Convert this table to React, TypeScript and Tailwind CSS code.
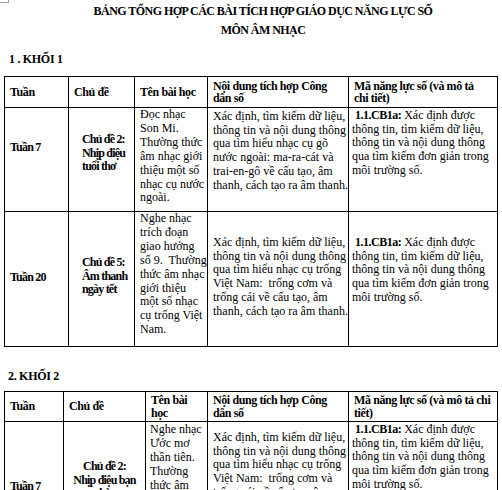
import React from "react";

const serif = { fontFamily: '"Liberation Serif", "Times New Roman", serif' };

function Lines({ lines }: { lines: React.ReactNode[] }) {
  return (
    <>
      {lines.map((l, i) => (
        <div key={i} className="whitespace-pre">
          {l}
        </div>
      ))}
    </>
  );
}

const col5Lines: React.ReactNode[] = [
  <>
    {" "}
    <b className="tracking-[-0.5px]">1.1.CB1a:</b> Xác định được
  </>,
  "thông tin, tìm kiếm dữ liệu,",
  "thông tin và nội dung thông",
  "qua tìm kiếm đơn giản trong",
  "môi trường số.",
];

const th =
  "border border-black align-middle font-bold text-left leading-[12.5px] px-[5px] py-0 whitespace-nowrap tracking-[-0.4px]";
const td = "border border-black align-top p-0 leading-[13.7px]";
const tbl = "ml-[4px] w-[493px] table-fixed border-collapse text-[12px] text-black";
const bold = "font-bold tracking-[-0.8px]";

export default function App() {
  return (
    <div className="relative h-[490px] w-[502px] overflow-hidden bg-white text-black text-[12px]" style={serif}>
      <div className="absolute left-0 top-0 h-[3px] w-[9px] border-b border-r border-[#9a9a9a]" />
      <div className="pl-[24px] pt-[2px] text-center font-bold text-[12px] leading-[19px] tracking-[-0.55px]">
        <div>BẢNG TỔNG HỢP CÁC BÀI TÍCH HỢP GIÁO DỤC NĂNG LỰC SỐ</div>
        <div>MÔN ÂM NHẠC</div>
      </div>
      <div className="mt-[11px] pl-[9px] font-bold text-[12px] leading-[16px] tracking-[-0.3px]">1 . KHỐI 1</div>
      <table className={tbl + " mt-[9px]"} style={serif}>
        <colgroup>
          <col className="w-[64px]" />
          <col className="w-[66px]" />
          <col className="w-[73px]" />
          <col className="w-[141px]" />
          <col className="w-[149px]" />
        </colgroup>
        <tbody>
          <tr className="h-[31px]">
            <th className={th}>Tuần</th>
            <th className={th}>Chủ đề</th>
            <th className={th}>Tên bài học</th>
            <th className={th}>
              Nội dung tích hợp Công
              <br />
              dân số
            </th>
            <th className={th}>
              Mã năng lực số (và mô tả
              <br />
              chi tiết)
            </th>
          </tr>
          <tr className="h-[104px]">
            <td className={td}>
              <div className={"pl-[5px] pt-[33px] " + bold}>Tuần 7</div>
            </td>
            <td className={td}>
              <div className={"pl-[13px] pt-[25px] " + bold}>
                <Lines lines={["Chủ đề 2:", "Nhịp điệu", "tuổi thơ"]} />
              </div>
            </td>
            <td className={td}>
              <div className="pl-[5px] pt-0 leading-[13.9px]">
                <Lines
                  lines={["Đọc nhạc", "Son Mi.", "Thường thức", "âm nhạc giới", "thiệu một số", "nhạc cụ nước", "ngoài."]}
                />
              </div>
            </td>
            <td className={td}>
              <div className="pl-[5px] pt-[2px]">
                <Lines
                  lines={[
                    "Xác định, tìm kiếm dữ liệu,",
                    "thông tin và nội dung thông",
                    "qua tìm hiểu nhạc cụ gõ",
                    "nước ngoài: ma-ra-cát và",
                    "trai-en-gô về cấu tạo, âm",
                    "thanh, cách tạo ra âm thanh.",
                  ]}
                />
              </div>
            </td>
            <td className={td}>
              <div className="pl-[3px] pt-[1px]">
                <Lines lines={col5Lines} />
              </div>
            </td>
          </tr>
          <tr className="h-[135px]">
            <td className={td}>
              <div className={"pl-[5px] pt-[59px] " + bold}>Tuần 20</div>
            </td>
            <td className={td}>
              <div className={"pl-[13px] pt-[44px] " + bold}>
                <Lines lines={["Chủ đề 5:", "Âm thanh", "ngày tết"]} />
              </div>
            </td>
            <td className={td}>
              <div className="pl-[5px] pt-0 leading-[13.9px]">
                <Lines
                  lines={[
                    "Nghe nhạc",
                    "trích đoạn",
                    "giao hưởng",
                    "số 9.  Thường",
                    "thức âm nhạc",
                    "giới thiệu",
                    "một số nhạc",
                    "cụ trống Việt",
                    "Nam.",
                  ]}
                />
              </div>
            </td>
            <td className={td}>
              <div className="pl-[5px] pt-[24px]">
                <Lines
                  lines={[
                    "Xác định, tìm kiếm dữ liệu,",
                    "thông tin và nội dung thông",
                    "qua tìm hiểu nhạc cụ trống",
                    "Việt Nam:  trống cơm và",
                    "trống cái về cấu tạo, âm",
                    "thanh, cách tạo ra âm thanh.",
                  ]}
                />
              </div>
            </td>
            <td className={td}>
              <div className="pl-[3px] pt-[24px]">
                <Lines lines={col5Lines} />
              </div>
            </td>
          </tr>
        </tbody>
      </table>
      <div className="mt-[21px] pl-[8px] font-bold text-[12px] leading-[16px] tracking-[-0.3px]">2. KHỐI 2</div>
      <table className={tbl + " mt-[7px]"} style={serif}>
        <colgroup>
          <col className="w-[59px]" />
          <col className="w-[82px]" />
          <col className="w-[62px]" />
          <col className="w-[141px]" />
          <col className="w-[149px]" />
        </colgroup>
        <tbody>
          <tr className="h-[30px]">
            <th className={th}>Tuần</th>
            <th className={th}>Chủ đề</th>
            <th className={th}>
              Tên bài
              <br />
              học
            </th>
            <th className={th}>
              Nội dung tích hợp Công
              <br />
              dân số
            </th>
            <th className={th}>
              Mã năng lực số (và mô tả chi
              <br />
              tiết)
            </th>
          </tr>
          <tr className="h-[120px]">
            <td className={td}>
              <div className={"pl-[5px] pt-[58px] " + bold}>Tuần 7</div>
            </td>
            <td className={td}>
              <div className={"pt-[38px] text-center " + bold}>
                <Lines lines={["Chủ đề 2:", "Nhịp điệu bạn", "bè"]} />
              </div>
            </td>
            <td className={td}>
              <div className="pl-[4px] pt-[1px] leading-[13.9px]">
                <Lines lines={["Nghe nhạc", "Ước mơ", "thần tiên.", "Thường", "thức âm", "nhạc giới"]} />
              </div>
            </td>
            <td className={td}>
              <div className="pl-[5px] pt-[9px]">
                <Lines
                  lines={[
                    "Xác định, tìm kiếm dữ liệu,",
                    "thông tin và nội dung thông",
                    "qua tìm hiểu nhạc cụ trống",
                    "Việt Nam:  trống cơm và",
                    "trống cái về cấu tạo, âm",
                  ]}
                />
              </div>
            </td>
            <td className={td}>
              <div className="pl-[3px] pt-[1px]">
                <Lines lines={col5Lines} />
              </div>
            </td>
          </tr>
        </tbody>
      </table>
    </div>
  );
}
